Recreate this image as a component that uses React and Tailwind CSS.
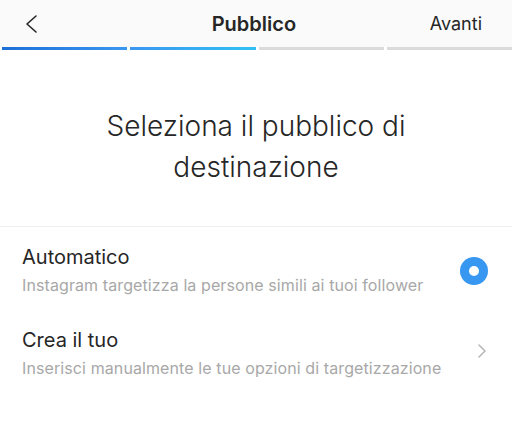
export default function App() {
	return (
		<div
			className="w-[512px] h-[430px] bg-white text-[#262626] overflow-hidden"
			style={{ fontFamily: "Inter, 'Liberation Sans', sans-serif" }}
		>
			{/* Header */}
			<div className="bg-[#fafafa] h-[47px] flex items-center justify-between pl-[22px] pr-[30px]">
				<svg width="16" height="18" viewBox="0 0 16 18" className="ml-[2px]">
					<path d="M12 1 L3 9 L12 17" fill="none" stroke="#262626" strokeWidth="1.6" strokeLinecap="round" strokeLinejoin="round" />
				</svg>
				<span className="text-[20px] font-semibold ml-[38px]">Pubblico</span>
				<span className="text-[18px]">Avanti</span>
			</div>

			{/* Progress */}
			<div className="flex gap-[3px] h-[3px] pl-[2px]">
				<div className="flex-1 bg-gradient-to-r from-[#1d6fd8] to-[#3a96f0]" />
				<div className="flex-1 bg-gradient-to-r from-[#3a96f0] to-[#31c1f3]" />
				<div className="flex-1 bg-[#dbdbdb]" />
				<div className="flex-1 bg-[#dbdbdb]" />
			</div>

			{/* Heading */}
			<div className="pt-[56px] pb-[38px] flex justify-center">
				<h1 className="text-[28px] font-light leading-[41px] text-center w-[340px] text-[#262626]">
					Seleziona il pubblico di destinazione
				</h1>
			</div>

			<div className="h-px bg-[#efefef]" />

			{/* Options */}
			<div className="pt-[18px] flex flex-col gap-[31px]">
				<div className="flex items-center justify-between pl-[22px] pr-[24px]">
					<div className="flex flex-col gap-[4px]">
						<span className="text-[20px] leading-[24px]">Automatico</span>
						<span className="text-[16px] leading-[24px] tracking-[0.1px] text-[#a8a8a8]">
							Instagram targetizza la persone simili ai tuoi follower
						</span>
					</div>
					<div className="w-[28px] h-[28px] rounded-full bg-[#3897f0] flex items-center justify-center">
						<div className="w-[10px] h-[10px] rounded-full bg-white" />
					</div>
				</div>
				<div className="flex items-center justify-between pl-[22px] pr-[24px]">
					<div className="flex flex-col gap-[4px]">
						<span className="text-[20px] leading-[24px]">Crea il tuo</span>
						<span className="text-[16px] leading-[24px] tracking-[0.1px] text-[#a8a8a8]">
							Inserisci manualmente le tue opzioni di targetizzazione
						</span>
					</div>
					<svg width="10" height="16" viewBox="0 0 10 16" className="mr-[1px] mb-[6px]">
						<path d="M2 2 L8 8 L2 14" fill="none" stroke="#b5b5b5" strokeWidth="1.5" strokeLinecap="round" strokeLinejoin="round" />
					</svg>
				</div>
			</div>
		</div>
	);
}
